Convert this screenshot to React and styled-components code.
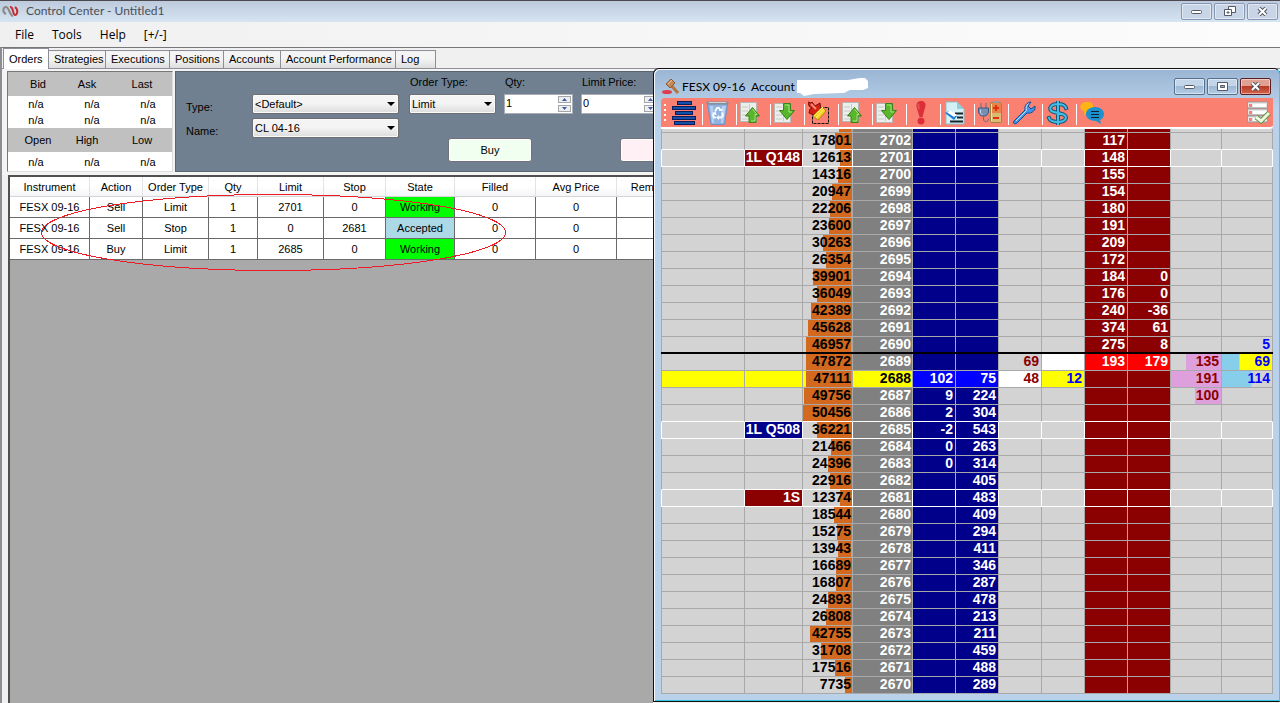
import React from 'react';
import styled, { createGlobalStyle } from 'styled-components';


const GlobalStyle = createGlobalStyle`
    * {
        box-sizing: border-box;
    }

    body {
        margin: 0;
        background: #f0f0f0;
        color: #000;
        font: 11px/16px "Liberation Sans", Arial, sans-serif;
        overflow: hidden;
    }

    button, input, select {
        font: inherit;
        color: inherit;
        margin: 0;
        padding: 0;
    }

    svg {
        display: block;
    }
`;

const Page = styled.div`
    position: relative;
    display: flex;
    flex-direction: column;
    min-height: 100vh;
`;

const TitleBar = styled.header`
    display: flex;
    align-items: center;
    gap: 6px;
    height: 22px;
    padding: 0 2px 1px;
    border-top: 1px solid #4c4a50;
    background: linear-gradient(#bccadc, #d7e4f2);
    color: #4a4f57;
    font: 12px/18px Lato, "Open Sans", sans-serif;
`;

const WindowButtons = styled.div`
    display: flex;
    gap: 2px;
    margin-left: auto;
`;

const WindowButton = styled.button`
    display: flex;
    align-items: center;
    justify-content: center;
    width: 31px;
    height: 17px;
    border: 1px solid ${({ $close }) => ($close ? '#5a1f24' : $close === false ? '#55708f' : '#8796b4')};
    border-radius: 2px;
    box-shadow: inset 0 0 0 1px rgba(255, 255, 255, 0.45);
    background: ${({ $close }) => ($close
        ? 'linear-gradient(#e0a193 0 45%, #b93b26 50%, #d2644c)'
        : $close === false ? 'linear-gradient(#c3d5e9 0 45%, #9db8d4 50%, #b5cde6)' : '#c8d5e6')};
`;

const MenuBar = styled.nav`
    display: flex;
    gap: 18px;
    height: 25px;
    padding: 0 15px;
    background: linear-gradient(90deg, #f0f0f0, #fcfcfc);
    font: 12px/24px "Open Sans", "Noto Sans", sans-serif;

    button {
        border: 0;
        background: none;
    }
`;

const Workspace = styled.main`
    flex: 1;
    display: flex;
    flex-direction: column;
    border-top: 1px solid #77777b;
    border-left: 2px solid #8d8d94;
`;

const Tabs = styled.div`
    display: flex;
    align-items: flex-end;
    height: 21px;
    padding-left: 1px;
    border-bottom: 1px solid #8c8e98;
`;

const Tab = styled.button`
    width: ${({ $width }) => $width}px;
    height: ${({ $active }) => ($active ? 21 : 18)}px;
    margin-bottom: ${({ $active }) => ($active ? -1 : 0)}px;
    padding-left: 5px;
    border: 1px solid #8c8e98;
    border-bottom: 0;
    border-left-width: ${({ $active }) => ($active ? 1 : 0)}px;
    background: ${({ $active }) => ($active ? '#fff' : 'linear-gradient(#f4f4f4 45%, #dedede)')};
    line-height: 17px;
    text-align: left;
    white-space: nowrap;
`;

const TopPanels = styled.div`
    display: flex;
    gap: 2px;
    height: 106px;
    padding: 2px 0 3px 5px;
    background: #f4f4f4;
`;

const Quotes = styled.section`
    width: 166px;
    border: 1px solid #777;
    border-right-color: #ddd;
    border-bottom-color: #ddd;
    background: #fff;
`;

const QuoteHead = styled.div`
    display: grid;
    grid-template-columns: 48px 50px 60px;
    height: 24px;
    padding-left: 6px;
    background: #c0c0c0;
    line-height: 24px;
    text-align: center;
`;

const QuoteValues = styled.div`
    display: grid;
    grid-template-columns: 56px 56px 56px;
    line-height: ${({ $line }) => $line}px;
    text-align: center;
`;

const OrderForm = styled.form`
    flex: 1;
    display: flex;
    gap: 10px;
    padding-left: 10px;
    border: 1px solid #5a6570;
    background: #708090;
`;

const Selectors = styled.div`
    display: grid;
    grid-template-columns: 66px 147px;
    grid-auto-rows: 20px;
    row-gap: 4px;
    align-content: start;
    padding-top: 22px;

    label {
        line-height: 26px;
    }
`;

const Entry = styled.div`
    flex: 1;
    padding-top: 2px;
`;

const FieldRow = styled.div`
    display: flex;
    gap: 8px;
`;

const Field = styled.div`
    width: ${({ $width }) => $width}px;

    label {
        display: block;
        padding: 0 0 4px 1px;
    }
`;

const SelectBox = styled.div`
    display: flex;
    align-items: center;
    height: 20px;
    border: 1px solid #6d6f73;
    border-radius: 2px;
    background: linear-gradient(#f4f4f4 45%, #dcdcdc);
    box-shadow: inset 0 0 0 1px #fafafa;
    padding-right: 3px;

    select {
        flex: 1;
        min-width: 0;
        height: 18px;
        padding-left: 2px;
        border: 0;
        background: none;
        appearance: none;
    }
`;

const SpinBox = styled.div`
    display: flex;
    height: 20px;
    border: 1px solid #a9adb6;
    background: #fff;

    input {
        flex: 1;
        min-width: 0;
        padding: 0 1px 2px;
        border: 0;
        background: none;
    }
`;

const SpinButtons = styled.div`
    display: grid;
    gap: 1px;
    padding: 1px;

    button {
        display: flex;
        align-items: center;
        justify-content: center;
        width: 13px;
        height: 7px;
        border: 1px solid #a3a5ab;
        background: #eee;
    }
`;

const ActionRow = styled.div`
    display: flex;
    gap: 88px;
    padding: 24px 0 0 39px;
`;

const ActionButton = styled.button`
    width: 84px;
    height: 24px;
    border: 1px solid #70747a;
    border-radius: 3px;
    box-shadow: inset 0 0 0 1px #fff;
    background: ${({ $color }) => $color};
`;

const OrdersGrid = styled.section`
    position: relative;
    flex: 1;
    margin-left: 6px;
    border-top: 2px solid #505050;
    border-left: 2px solid #505050;
    background: #a9a9a9;
`;

const OrdersTable = styled.table`
    width: 688px;
    table-layout: fixed;
    border-collapse: separate;
    border-spacing: 0;
    background: #fff;
    text-align: center;

    th {
        height: 20px;
        padding: 1px 0 0;
        border-right: 1px solid #e2e3e5;
        border-bottom: 1px solid #d5d5d5;
        background: linear-gradient(#fff 50%, #f4f5f7);
        font-weight: normal;
    }
`;

const stateColors = { Working: '#00ff00', Accepted: '#add8e6' };

const OrderCell = styled.td`
    height: 21px;
    padding: 0;
    border-right: 1px solid #6a6a6a;
    border-bottom: 1px solid #6a6a6a;
    background: ${({ $state }) => stateColors[$state] || '#fff'};
`;

const Highlight = styled.svg`
    position: absolute;
    left: 31px;
    top: 16px;
    pointer-events: none;
`;

const DomWindow = styled.section`
    position: absolute;
    top: 68px;
    left: 653px;
    right: 0;
    padding: 0 6px 7px 7px;
    border: 1px solid #111;
    border-right-color: #45c8e6;
    border-radius: 6px 6px 0 0;
    background: linear-gradient(#9ab5d3, #b9d1ea 40px);
    box-shadow: inset 1px 1px 0 #f4f8fc, inset 0 -1px 0 #2fc4e0, 0 2px 0 #f4f4f4;
`;

const DomTitle = styled.header`
    display: flex;
    align-items: center;
    gap: 2px;
    height: 29px;
    padding: 6px 2px 0 1px;
    font: 12px/18px Lato, "Open Sans", sans-serif;
    white-space: pre;
`;

const Toolbar = styled.div`
    display: flex;
    align-items: center;
    height: 31px;
    padding: 0 2px 0 3px;
    border-bottom: 2px solid #fff;
    border-radius: 4px 0 4px 0;
    background: #fa8072;
`;

const ToolButton = styled.button`
    width: 24px;
    height: 24px;
    border: 0;
    background: none;

    &:last-child {
        margin-left: auto;
    }
`;

const Separator = styled.span`
    width: 1px;
    height: 21px;
    margin: 3px 3px 0 6px;
    background: #fff;
`;

const Ladder = styled.table`
    width: 100%;
    table-layout: fixed;
    border-collapse: separate;
    border-spacing: 0;
    background: #d3d3d3;
    font-size: 14px;
    font-weight: bold;
    text-align: right;
`;

const LadderCell = styled.td`
    position: relative;
    height: ${({ $stub }) => ($stub ? 4 : 17)}px;
    padding: 0 ${({ $pad }) => $pad || 2}px ${({ $stub }) => ($stub ? 0 : 1)}px 0;
    border-right: 1px solid ${({ $side }) => $side || '#a9a9a9'};
    border-bottom: 1px solid ${({ $bottom }) => $bottom || '#a9a9a9'};
    background-color: ${({ $bg }) => $bg || '#d3d3d3'};
    background-image: ${({ $bar }) => ($bar ? `linear-gradient(${$bar}, ${$bar})` : 'none')};
    background-repeat: no-repeat;
    background-position: ${({ $from }) => $from || 'right'};
    color: ${({ $fg }) => $fg || '#fff'};
    line-height: 15px;
    white-space: nowrap;

    &:first-child {
        border-left: 1px solid ${({ $side }) => $side || '#a9a9a9'};
    }

    /* market divider */
    &::after {
        content: ${({ $divider }) => ($divider ? '""' : 'none')};
        position: absolute;
        left: -1px;
        right: -1px;
        bottom: -1px;
        height: 2px;
        background: #000;
    }
`;

const tabs = [
    ['Orders', 46], ['Strategies', 57], ['Executions', 64], ['Positions', 54],
    ['Accounts', 57], ['Account Performance', 115], ['Log', 40],
];

const orderColumns = [
    ['Instrument', 80], ['Action', 53], ['Order Type', 66], ['Qty', 49], ['Limit', 66],
    ['Stop', 62], ['State', 69], ['Filled', 81], ['Avg Price', 81], ['Remaining', 81],
];

const orders = [
    ['FESX 09-16', 'Sell', 'Limit', 1, 2701, 0, 'Working', 0, 0, ''],
    ['FESX 09-16', 'Sell', 'Stop', 1, 0, 2681, 'Accepted', 0, 0, ''],
    ['FESX 09-16', 'Buy', 'Limit', 1, 2685, 0, 'Working', 0, 0, ''],
];

const ladderColumns = [83, 58, 50, 60, 43, 43, 43, 43, 43, 43, 51, 51];

// price, volume, bid change, bid size, ask size, ask change
const ladder = [
    [2702, 17801, '', '', 117, ''],
    [2701, 12613, '', '', 148, ''],
    [2700, 14316, '', '', 155, ''],
    [2699, 20947, '', '', 154, ''],
    [2698, 22206, '', '', 180, ''],
    [2697, 23600, '', '', 191, ''],
    [2696, 30263, '', '', 209, ''],
    [2695, 26354, '', '', 172, ''],
    [2694, 39901, '', '', 184, 0],
    [2693, 36049, '', '', 176, 0],
    [2692, 42389, '', '', 240, -36],
    [2691, 45628, '', '', 374, 61],
    [2690, 46957, '', '', 275, 8],
    [2689, 47872, '', '', 193, 179],
    [2688, 47111, 102, 75, '', ''],
    [2687, 49756, 9, 224, '', ''],
    [2686, 50456, 2, 304, '', ''],
    [2685, 36221, -2, 543, '', ''],
    [2684, 21466, 0, 263, '', ''],
    [2683, 24396, 0, 314, '', ''],
    [2682, 22916, '', 405, '', ''],
    [2681, 12374, '', 483, '', ''],
    [2680, 18544, '', 409, '', ''],
    [2679, 15275, '', 294, '', ''],
    [2678, 13943, '', 411, '', ''],
    [2677, 16689, '', 346, '', ''],
    [2676, 16807, '', 287, '', ''],
    [2675, 24893, '', 478, '', ''],
    [2674, 26808, '', 213, '', ''],
    [2673, 42755, '', 211, '', ''],
    [2672, 31708, '', 459, '', ''],
    [2671, 17516, '', 488, '', ''],
    [2670, 7735, '', 289, '', ''],
];

const maxVolume = 50456;
const lastPrice = 2688;
const bestAsk = 2689;

const working = {
    2701: { text: '1L Q148', bg: '#8b0000' },
    2685: { text: '1L Q508', bg: '#00008b' },
    2681: { text: '1S', bg: '#8b0000' },
};

const soldAt = { 2689: 69, 2688: 48 };
const boughtAt = { 2688: 12 };
const sellProfile = { 2689: 135, 2688: 191, 2687: 100 };
const buyProfile = {
    2690: { text: 5 },
    2689: { text: 69, size: 35, bg: '#ffff00' },
    2688: { text: 114, size: 59 },
};

const LadderRow = ({ price, volume, bidChange, bid, ask, askChange }) => {
    const order = working[price];
    const isLast = price === lastPrice;
    const isAsk = price === bestAsk;
    const line = {
        $side: order ? '#fff' : undefined,
        $bottom: order || working[price - 1] ? '#fff' : undefined,
        $divider: price === bestAsk + 1,
    };
    const highlight = isLast ? '#ffff00' : undefined;
    const bidColor = isLast ? '#0000ff' : '#00008b';
    const askColor = isAsk ? '#ff0000' : '#8b0000';
    const profile = buyProfile[price] || {};

    return (
        <tr>
            <LadderCell {...line} $bg={highlight} />
            <LadderCell {...line} $bg={order ? order.bg : highlight}>{order && order.text}</LadderCell>
            <LadderCell {...line} $pad={1} $bg={highlight} $bar="#d2691e" $fg="#000" style={{ backgroundSize: `${volume / maxVolume * 100}% 100%` }}>{volume}</LadderCell>
            <LadderCell {...line} $pad={1} $bg={highlight || '#808080'} $fg={isLast ? '#000' : '#fff'}>{price}</LadderCell>
            <LadderCell {...line} $bg={bidColor}>{bidChange}</LadderCell>
            <LadderCell {...line} $bg={bidColor}>{bid}</LadderCell>
            <LadderCell {...line} $bg={isLast ? '#fff' : undefined} $fg="#8b0000">{soldAt[price]}</LadderCell>
            <LadderCell {...line} $bg={isAsk ? '#fff' : highlight} $fg="#0000ff">{boughtAt[price]}</LadderCell>
            <LadderCell {...line} $bg={askColor}>{ask}</LadderCell>
            <LadderCell {...line} $bg={askColor}>{askChange}</LadderCell>
            <LadderCell {...line} $bar={sellProfile[price] && '#dda0dd'} $fg="#8b0000" style={{ backgroundSize: `${(sellProfile[price] || 0) / 191 * 100}% 100%` }}>{sellProfile[price]}</LadderCell>
            <LadderCell {...line} $bg={profile.bg} $bar={profile.size && '#87ceeb'} $from="left" $fg="#0000ff" style={{ backgroundSize: `${profile.size || 0}% 100%` }}>{profile.text}</LadderCell>
        </tr>
    );
};

const stubColors = ['', '', '', '#808080', '#00008b', '#00008b', '', '', '#8b0000', '#8b0000', '', ''];

const Arrow = ({ up, small }) => (
    small
        ? <svg width="5" height="3"><path d={up ? 'M0 3h5L2.500 0z' : 'M0 0h5L2.500 3z'} fill="#3f5f9f" /></svg>
        : <svg width="8" height="4"><path d="M0 0h8L4 4z" /></svg>
);

const Icon = ({ children, size = 24 }) => <svg width={size} height={size} viewBox={`0 0 ${size} ${size}`}>{children}</svg>;

const BarsIcon = () => (
    <Icon>
        <g fill="#1450a8" stroke="#0b1c5c" strokeWidth="1">
            <rect x="5.500" y=".5" width="14" height="3" />
            <rect x=".5" y="5.500" width="23" height="3" />
            <rect x="3.500" y="10.500" width="17" height="3" />
            <rect x=".5" y="15.500" width="23" height="3" />
            <rect x="2.500" y="20.500" width="20" height="3" />
        </g>
    </Icon>
);

const TrashIcon = () => (
    <Icon>
        <path d="M1.500 3h20l-3 20.500H5z" fill="#8fb2df" stroke="#6d91c6" />
        <path d="M4 5h3l1 17H6zM16 5h4l-3 17h-2z" fill="#b9d1f0" />
        <rect x="0.500" y="0.500" width="22" height="3" rx="1" fill="#8a8f99" />
        <rect x="3" y="1" width="17" height="1" fill="#ccd4df" />
        <g fill="none" stroke="#f5fbff" strokeWidth="2">
            <path d="M9 10.500l2-3.500h2l1.500 2.500M16 11.500l1 3-2 2h-2.500M10 16.500H8l-1-2.500 1.500-2.500" />
        </g>
        <path d="M12.500 10h4V7zM13 14v5l-3-2.500zM6 12l4-1 .5 3.500z" fill="#f5fbff" />
    </Icon>
);

const DocIcon = ({ up }) => (
    <Icon>
        <path d={up ? 'M.5 1.500h16v19H.5z' : 'M.5 2.500h16v19H.5z'} fill="#eceeec" stroke="#b5b8b2" />
        <path d="M2 6h6M2 10h6M2 14h6M2 18h6M9.500 3v17" stroke="#c6cbc4" fill="none" />
        {up
            ? <path d="M12.500 6.500l7 8.500h-3.500v6.500H9V15H5.500z" fill="#59b52c" stroke="#3a8219" />
            : <path d="M9.500 2.500h7v7h4L13 18.500 5.500 9.500h4z" fill="#59b52c" stroke="#3a8219" />}
        <path d={up ? 'M12.500 8l4.500 5.500h-2V20h-4' : 'M11 4h4v7h3'} fill="none" stroke="#a5e47c" />
    </Icon>
);

const BrushIcon = () => (
    <Icon>
        <rect x="4.500" y="6.500" width="16" height="16" fill="none" stroke="#111" strokeWidth="1" strokeDasharray="3 1" />
        <path d="M0 1l3 1 1-1 3 4 5-3 1 7-5 6-7-3 1-4 2-1-3-2z" fill="#d32113" stroke="#7e0f0b" />
        <path d="M3 3l5 5" stroke="#ff8b76" strokeWidth="2" />
        <path d="M14 6l4 4-8 9-5-4z" fill="#f9cf21" stroke="#b48a12" />
        <path d="M16 8l-8 9M15 6l-9 9" stroke="#fff178" />
    </Icon>
);

const AlertIcon = () => (
    <Icon>
        <path d="M11 0c3 0 5 2 4.500 5L12.500 16h-3L6.500 6C6 2 8 0 11 0z" fill="#dc2f39" />
        <circle cx="11" cy="20" r="3.500" fill="#dc2f39" />
        <path d="M9 3c-1 1-1 2 0 5" stroke="#e85058" strokeWidth="2" fill="none" />
    </Icon>
);

const PageIcon = () => (
    <Icon>
        <path d="M2 1h11l7 7v15H2z" fill="#d4f1f5" stroke="#8fbfcb" />
        <path d="M13 1v7h7z" fill="#96cddd" />
        <path d="M11 12.500h8M13 16.500h6M6 20.500h13" stroke="#14252b" strokeWidth="2" />
        <path d="M1 12l4-2 8 5-3 4z" fill="#1b7bd8" />
        <path d="M3 11.500l3-2 7 4.500-3 2z" fill="#fff" />
    </Icon>
);

const PowerIcon = () => (
    <Icon>
        <path d="M3 2v6M8 2v6" stroke="#5c6f86" strokeWidth="1" />
        <path d="M.5 7h10v3c0 3-2 5-4 5h-2c-2 0-4-2-4-5z" fill="#7690b5" stroke="#3f5880" />
        <path d="M2.500 8.500v3c0 1 1 2 2 2" fill="none" stroke="#c8d6ea" strokeWidth="1" />
        <path d="M5.500 15v3c0 4 5 3 5 0" fill="none" stroke="#6d7078" strokeWidth="1" />
        <rect x="12.500" y="1.500" width="11" height="20" rx="1" fill="#d9bb74" stroke="#9d8441" />
        <rect x="15" y="0" width="6" height="2" fill="#9b9b9b" />
        <rect x="13" y="2" width="10" height="10" fill="#e78447" />
        <path d="M13.500 3v17" stroke="#f1dfae" />
        <path d="M15 7h6M18 4v6M15 17h6" stroke="#e2310f" strokeWidth="2" />
    </Icon>
);

const WrenchIcon = () => (
    <Icon>
        <path d="M2 20L13 9c-1-4 2-8 6-8l-3 4 3 3 4-3c1 4-3 8-8 7L5 22c-2 2-5 0-3-2z" fill="#3f92e5" stroke="#174f9b" strokeWidth="1" />
        <path d="M4 20L14.500 9.500c-1-3 0-5 2-7" fill="none" stroke="#c7e5ff" strokeWidth="1" />
    </Icon>
);

const DollarIcon = () => (
    <Icon>
        <g fill="none" strokeLinecap="square">
            <path d="M20 7c-1-3-4-4-8-4-9 0-10 7-4 8l8 2c7 2 4 8-4 8-5 0-8-1-9-4M12 1v22" stroke="#15577a" strokeWidth="4" />
            <path d="M20 7c-1-3-4-4-8-4-9 0-10 7-4 8l8 2c7 2 4 8-4 8-5 0-8-1-9-4M12 1v22" stroke="#42bfe7" strokeWidth="2" />
        </g>
    </Icon>
);

const ChatIcon = () => (
    <Icon>
        <path d="M5 1h4c5 0 6 9 0 10l-5 3v-4C-1 9-1 2 5 1z" fill="#fcb415" />
        <path d="M15 6c5 0 9 3 9 7 0 3-2 5-4 6l1 4-5-3c-6 0-10-3-10-7s4-7 9-7z" fill="#1b91cf" />
        <path d="M11 10.500h8M11 13.500h8M11 16.500h8" stroke="#0a202c" />
    </Icon>
);

const ChecklistIcon = () => (
    <Icon>
        {[1, 8, 15].map(y => (
            <g key={y}>
                <rect x=".5" y={y} width="20" height="6" fill="#e7e7e7" stroke="#9a9b9b" />
                <rect x="2" y={y + 2} width="3" height="3" fill="#fa8072" />
                <rect x="6" y={y + 2} width="13" height="3" fill="#fff" />
            </g>
        ))}
        <path d="M9 16l5 4 8-8" fill="none" stroke="#5f9142" strokeWidth="5" />
        <path d="M9 16l5 4 8-8" fill="none" stroke="#edf8e2" strokeWidth="3" />
    </Icon>
);

const GavelIcon = () => (
    <Icon size={18}>
        <ellipse cx="5" cy="14" rx="5" ry="2" fill="#dd3c4b" />
        <path d="M8 6l8 9" stroke="#b57440" strokeWidth="3" />
        <path d="M4 6l5-5 4 4-5 5z" fill="#c48a58" stroke="#8d5a35" />
        <path d="M6 6l4-4" stroke="#edc49a" />
    </Icon>
);

const LogoIcon = () => (
    <svg width="18" height="14" viewBox="0 0 18 14" fill="none" strokeWidth="2">
        <path d="M4 10C0 8 1 3 4 3s4 9 7 9" stroke="#8b8787" />
        <path d="M8 3c3-1 3 8 5 8s4-5 0-8" stroke="#c72c33" />
    </svg>
);

const MinimizeGlyph = () => <svg width="11" height="7"><rect x=".5" y="2.500" width="10" height="3" rx="1" fill="#fff" stroke="#555a66" /></svg>;
const CloseGlyph = () => (
    <svg width="11" height="9">
        <path d="M2 1l7 7M9 1L2 8" stroke="#505562" strokeWidth="4" />
        <path d="M2 1l7 7M9 1L2 8" stroke="#fff" strokeWidth="2" />
    </svg>
);
const RestoreGlyph = () => (
    <svg width="12" height="11" fill="#fff" stroke="#555a66">
        <path d="M4.500.5h7v6h-7z" />
        <path d="M.5 3.500h7v6h-7z" />
        <path d="M3 6h2v1H3z" />
    </svg>
);
const MaximizeGlyph = () => (
    <svg width="11" height="9" fill="#fff" stroke="#555a66">
        <path d="M.5.5h10v8H.5z" />
        <path d="M3.500 3.500h4v2h-4z" fill="#9db8d4" />
    </svg>
);

const tools = [
    ['Center', <BarsIcon />],
    ['Delete', <TrashIcon />],
    ['Scroll up', <DocIcon up />],
    ['Scroll down', <DocIcon />],
    ['Clear', <BrushIcon />],
    ['Page up', <DocIcon up />],
    ['Page down', <DocIcon />],
    ['Alert', <AlertIcon />],
    ['Notes', <PageIcon />],
    ['Connection', <PowerIcon />],
    ['Settings', <WrenchIcon />],
    ['Profit', <DollarIcon />],
    ['Messages', <ChatIcon />],
];

const Spin = ({ id, value }) => (
    <SpinBox>
        <input id={id} defaultValue={value} />
        <SpinButtons>
            <button type="button" aria-label="Increase"><Arrow small up /></button>
            <button type="button" aria-label="Decrease"><Arrow small /></button>
        </SpinButtons>
    </SpinBox>
);

const Select = ({ id, value }) => (
    <SelectBox>
        <select id={id}><option>{value}</option></select>
        <Arrow />
    </SelectBox>
);

const ControlCenter = () => (
    <>
        <TitleBar>
            <LogoIcon />
            Control Center - Untitled1
            <WindowButtons>
                <WindowButton aria-label="Minimize"><MinimizeGlyph /></WindowButton>
                <WindowButton aria-label="Restore"><RestoreGlyph /></WindowButton>
                <WindowButton aria-label="Close"><CloseGlyph /></WindowButton>
            </WindowButtons>
        </TitleBar>
        <MenuBar>
            {['File', 'Tools', 'Help', '[+/-]'].map(item => <button key={item}>{item}</button>)}
        </MenuBar>
        <Workspace>
            <Tabs role="tablist">
                {tabs.map(([name, width], i) => <Tab key={name} role="tab" aria-selected={i === 0} $active={i === 0} $width={width}>{name}</Tab>)}
            </Tabs>
            <TopPanels>
                <Quotes>
                    <QuoteHead><span>Bid</span><span>Ask</span><span>Last</span></QuoteHead>
                    <QuoteValues $line={16}>
                        {[0, 1, 2, 3, 4, 5].map(i => <span key={i}>n/a</span>)}
                    </QuoteValues>
                    <QuoteHead><span>Open</span><span>High</span><span>Low</span></QuoteHead>
                    <QuoteValues $line={20}>
                        {[0, 1, 2].map(i => <span key={i}>n/a</span>)}
                    </QuoteValues>
                </Quotes>
                <OrderForm onSubmit={e => e.preventDefault()}>
                    <Selectors>
                        <label htmlFor="type">Type:</label>
                        <Select id="type" value="<Default>" />
                        <label htmlFor="name">Name:</label>
                        <Select id="name" value="CL 04-16" />
                    </Selectors>
                    <Entry>
                        <FieldRow>
                            <Field $width={87}>
                                <label htmlFor="orderType">Order Type:</label>
                                <Select id="orderType" value="Limit" />
                            </Field>
                            <Field $width={69}>
                                <label htmlFor="qty">Qty:</label>
                                <Spin id="qty" value="1" />
                            </Field>
                            <Field $width={78}>
                                <label htmlFor="limitPrice">Limit Price:</label>
                                <Spin id="limitPrice" value="0" />
                            </Field>
                        </FieldRow>
                        <ActionRow>
                            <ActionButton $color="#f0fff0">Buy</ActionButton>
                            <ActionButton $color="#fff0f5">Sell</ActionButton>
                        </ActionRow>
                    </Entry>
                </OrderForm>
            </TopPanels>
            <OrdersGrid>
                <OrdersTable>
                    <colgroup>{orderColumns.map(([name, width]) => <col key={name} width={width} />)}</colgroup>
                    <thead>
                        <tr>{orderColumns.map(([name]) => <th key={name}>{name}</th>)}</tr>
                    </thead>
                    <tbody>
                        {orders.map((order, i) => (
                            <tr key={i}>{order.map((value, j) => <OrderCell key={j} $state={value}>{value}</OrderCell>)}</tr>
                        ))}
                    </tbody>
                </OrdersTable>
                <Highlight width="465" height="79">
                    <ellipse cx="232.500" cy="39.500" rx="232" ry="38" fill="none" stroke="#ed1c24" shapeRendering="crispEdges" />
                </Highlight>
            </OrdersGrid>
        </Workspace>
    </>
);

const SuperDom = () => (
    <DomWindow>
        <DomTitle>
            <GavelIcon />
            <span>FESX 09-16  Account</span>
            <svg width="72" height="19" viewBox="0 0 72 19"><path d="M0 3h51l12-2h5l3 3v7l-5 2H53l-6 3-30 1-10 2-4-3H0z" fill="#fff" /></svg>
            <WindowButtons>
                <WindowButton $close={false} aria-label="Minimize"><MinimizeGlyph /></WindowButton>
                <WindowButton $close={false} aria-label="Maximize"><MaximizeGlyph /></WindowButton>
                <WindowButton $close aria-label="Close"><CloseGlyph /></WindowButton>
            </WindowButtons>
        </DomTitle>
        <Toolbar>
            <svg width="8" height="20">
                {[0, 5, 10, 15].map(y => <rect key={y} x="0" y={y + 1} width="2" height="2" fill="#fff" />)}
            </svg>
            {tools.map(([name, icon], i) => (
                <React.Fragment key={name}>
                    {i > 0 && <Separator />}
                    <ToolButton aria-label={name}>{icon}</ToolButton>
                </React.Fragment>
            ))}
            <ToolButton aria-label="Checklist"><ChecklistIcon /></ToolButton>
        </Toolbar>
        <Ladder>
            <colgroup>{ladderColumns.map((width, i) => <col key={i} width={i === 0 ? width + 1 : width} />)}</colgroup>
            <tbody>
                <tr>{stubColors.map((color, i) => <LadderCell key={i} $stub $bg={color} $bar={i === 2 && '#d2691e'} style={{ backgroundSize: '26% 100%' }} />)}</tr>
                {ladder.map(([price, volume, bidChange, bid, ask, askChange]) => (
                    <LadderRow key={price} price={price} volume={volume} bidChange={bidChange} bid={bid} ask={ask} askChange={askChange} />
                ))}
            </tbody>
        </Ladder>
    </DomWindow>
);

const App = () => (
    <Page>
        <GlobalStyle />
        <ControlCenter />
        <SuperDom />
    </Page>
);

export default App;
